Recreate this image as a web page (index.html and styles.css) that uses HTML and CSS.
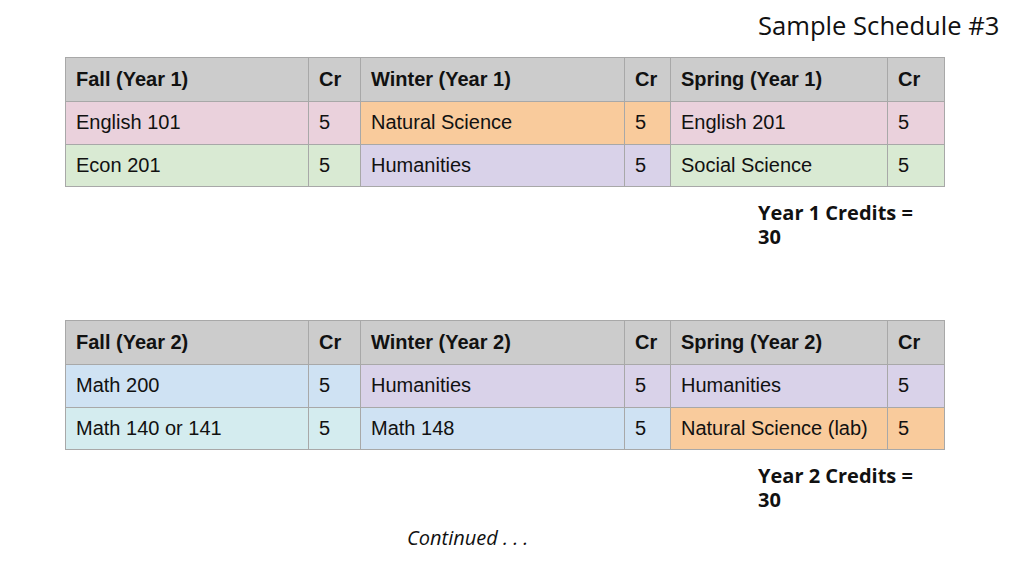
FILE: index.html
```html
<!DOCTYPE html>
<html lang="en">
<head>
  <meta charset="UTF-8">
  <title>Sample Schedule #3</title>
  <link rel="stylesheet" href="styles.css">
</head>
<body>

  <div class="slide">
    <h1 class="title">Sample Schedule #3</h1>

    <table class="plan first">
      <colgroup>
        <col class="c-course"><col class="c-cr">
        <col class="c-winter"><col class="c-cr2">
        <col class="c-spring"><col class="c-cr3">
      </colgroup>
      <tr>
        <th>Fall (Year 1)</th><th>Cr</th>
        <th>Winter (Year 1)</th><th>Cr</th>
        <th>Spring (Year 1)</th><th>Cr</th>
      </tr>
      <tr>
        <td class="pink">English 101</td><td class="pink">5</td>
        <td class="orange">Natural Science</td><td class="orange">5</td>
        <td class="pink">English 201</td><td class="pink">5</td>
      </tr>
      <tr>
        <td class="green">Econ 201</td><td class="green">5</td>
        <td class="purple">Humanities</td><td class="purple">5</td>
        <td class="green">Social Science</td><td class="green">5</td>
      </tr>
    </table>

    <p class="credits">Year 1 Credits =<br>30</p>

    <table class="plan second">
      <colgroup>
        <col class="c-course"><col class="c-cr">
        <col class="c-winter"><col class="c-cr2">
        <col class="c-spring"><col class="c-cr3">
      </colgroup>
      <tr>
        <th>Fall (Year 2)</th><th>Cr</th>
        <th>Winter (Year 2)</th><th>Cr</th>
        <th>Spring (Year 2)</th><th>Cr</th>
      </tr>
      <tr>
        <td class="blue">Math 200</td><td class="blue">5</td>
        <td class="purple">Humanities</td><td class="purple">5</td>
        <td class="purple">Humanities</td><td class="purple">5</td>
      </tr>
      <tr>
        <td class="cyan">Math 140 or 141</td><td class="cyan">5</td>
        <td class="blue">Math 148</td><td class="blue">5</td>
        <td class="orange">Natural Science (lab)</td><td class="orange">5</td>
      </tr>
    </table>

    <p class="credits">Year 2 Credits =<br>30</p>

    <p class="continued">Continued . . .</p>
  </div>

</body>
</html>
```

FILE: styles.css
```css
body {
  margin: 0;
  padding: 0;
  background: #fff;
  color: #111;
  font-family: "Open Sans", "Noto Sans", sans-serif;
}

.slide {
  width: 1024px;
  height: 576px;
  padding-left: 65px;
  box-sizing: border-box;
  overflow: hidden;
}

.title {
  margin: 0 0 0 693px;
  padding-top: 9px;
  font-size: 25.6px;
  font-weight: 400;
  line-height: 34px;
  white-space: nowrap;
}

.plan {
  border-collapse: collapse;
  width: 879px;
  table-layout: fixed;
  font-family: "Liberation Sans", Arial, sans-serif;
  font-size: 20px;
  color: #111;
}

.plan.first { margin-top: 14px; }
.plan.second { margin-top: 71px; }

.c-course { width: 243px; }
.c-cr { width: 52px; }
.c-winter { width: 264px; }
.c-cr2 { width: 46px; }
.c-spring { width: 217px; }
.c-cr3 { width: 57px; }

.plan th,
.plan td {
  border: 1px solid #a8a8a8;
  padding: 0 10px;
  height: 42.5px;
  text-align: left;
  vertical-align: middle;
  white-space: nowrap;
  box-sizing: border-box;
}

.plan th {
  background: #cccccc;
  font-weight: 700;
  height: 44px;
}

.pink { background: #ead1dc; }
.green { background: #d9ead3; }
.orange { background: #f9cb9c; }
.purple { background: #d9d2e9; }
.blue { background: #cfe2f3; }
.cyan { background: #d4ecef; }

.credits {
  margin: 14px 0 0 693px;
  font-size: 20px;
  font-weight: 700;
  line-height: 24px;
}

.continued {
  margin: 14px 0 0 342px;
  font-size: 20px;
  font-style: italic;
  line-height: 24px;
}
```
